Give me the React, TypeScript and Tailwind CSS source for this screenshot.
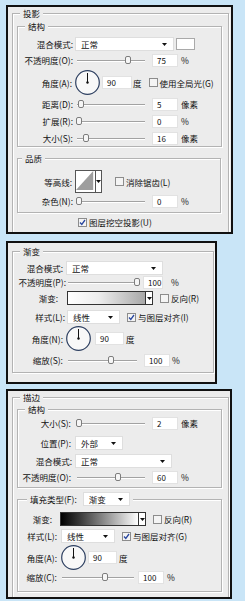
import type { ReactNode } from 'react'

function Arrow() {
    return <svg width="5" height="3" viewBox="0 0 5 3" className="shrink-0"><path d="M0 0h5L2.5 3z" fill="#111" /></svg>
}

function L({ w, children }: { w: string; children: ReactNode }) {
    return <span className={`${w} shrink-0 text-right whitespace-nowrap`}>{children}</span>
}

function Select({ text, cls }: { text: string; cls: string }) {
    return (
        <div className={`${cls} h-[14px] bg-white border border-[#dedede] flex items-center justify-between pl-[5px] pr-[6px] shrink-0`}>
            <span>{text}</span>
            <Arrow />
        </div>
    )
}

function Slider({ cls, at }: { cls: string; at: number }) {
    return (
        <div className={`relative ${cls} h-[10px] shrink-0 flex items-center`}>
            <div className="w-full h-px bg-[#a2a2a2] shadow-[0_1px_0_#fff]" />
            <div className="absolute top-[1px] w-[6px] h-[8px] rounded-[2px] border border-[#7d7d7d] bg-[#f6f6f6]" style={{ left: at }} />
        </div>
    )
}

function Num({ v, cls }: { v: string; cls: string }) {
    return <div className={`${cls} h-[13px] bg-white border border-[#e2e2e2] pl-[4px] text-[8px] leading-[11px] shrink-0`}>{v}</div>
}

function Dial() {
    return (
        <svg width="25" height="25" viewBox="0 0 25 25" className="shrink-0">
            <circle cx="12.5" cy="12.5" r="11.8" fill="#f8f8f8" stroke="#2d3f60" strokeWidth="1.2" />
            <line x1="12.5" y1="12.5" x2="12.5" y2="3" stroke="#111" />
            <circle cx="12.5" cy="12.5" r="1.2" fill="#111" />
        </svg>
    )
}

function Check({ on, cls = '' }: { on?: boolean; cls?: string }) {
    return (
        <div className={`${cls} w-[9px] h-[9px] border border-[#8c8c8c] bg-[#f4f4f4] shrink-0 flex items-center justify-center`}>
            {on && <svg width="7" height="7" viewBox="0 0 7 7"><path d="M1 3.5l1.8 2L6 1" fill="none" stroke="#2a48a0" strokeWidth="1.3" /></svg>}
        </div>
    )
}

function Group({ title, lcls, cls, children }: { title: ReactNode; lcls: string; cls: string; children: ReactNode }) {
    return (
        <fieldset className={`border border-[#b3b3b3] shadow-[inset_1px_1px_0_#fff,1px_1px_0_#fff] ${cls}`}>
            <legend className={`${lcls} px-[3px] bg-[#ececec] leading-[12px]`}>{title}</legend>
            {children}
        </fieldset>
    )
}

function GradBar({ cls, bg }: { cls: string; bg: string }) {
    return (
        <div className="flex shrink-0">
            <div className={`${cls} h-[14px] border border-[#333] ${bg}`} />
            <div className="w-[7px] h-[14px] border border-l-0 border-[#333] bg-white flex items-center justify-center"><Arrow /></div>
        </div>
    )
}

export default function App() {
    return (
        <div className="w-[245px] h-[601px] overflow-hidden bg-[#c9e5f7] pt-[5px] text-[8.5px] leading-[12px] text-[#111] font-['Noto_Sans_CJK_SC','Noto_Sans',sans-serif]">
            {/* 投影 */}
            <div className="ml-[6px] w-[227px] h-[229px] border-2 border-[#111] bg-[#ececec] flex flex-col pl-[4px] pr-[2px] overflow-hidden">
                <Group title="投影" lcls="ml-[7px]" cls="flex-1 border-b-0">
                    <Group title="结构" lcls="ml-[7px]" cls="ml-[4px] mr-[6px] mt-[1px] pb-[1px]">
                        <div className="flex items-center h-[14px] mt-[5px]">
                            <L w="w-[55px]">混合模式:</L>
                            <Select text="正常" cls="ml-[2px] w-[99px]" />
                            <div className="ml-[2px] w-[19px] h-[12px] bg-white border border-[#a9a9a9]" />
                        </div>
                        <div className="flex items-center h-[14px] mt-[2px]">
                            <L w="w-[55px]">不透明度(O):</L>
                            <Slider cls="ml-[4px] w-[68px]" at={48} />
                            <Num v="75" cls="ml-[7px] w-[26px]" />
                            <span className="ml-[3px]">%</span>
                        </div>
                        <div className="flex items-center h-[25px] mt-[3px]">
                            <L w="w-[54px]">角度(A):</L>
                            <div className="ml-[3px]"><Dial /></div>
                            <Num v="90" cls="ml-[2px] w-[30px]" />
                            <span className="ml-[1px]">度</span>
                            <Check cls="ml-[7px]" />
                            <span className="ml-[2px]">使用全局光(G)</span>
                        </div>
                        <div className="flex items-center h-[14px] mt-[2px]">
                            <L w="w-[55px]">距离(D):</L>
                            <Slider cls="ml-[4px] w-[68px]" at={1} />
                            <Num v="5" cls="ml-[7px] w-[26px]" />
                            <span className="ml-[3px]">像素</span>
                        </div>
                        <div className="flex items-center h-[14px] mt-[3px]">
                            <L w="w-[55px]">扩展(R):</L>
                            <Slider cls="ml-[4px] w-[68px]" at={-1} />
                            <Num v="0" cls="ml-[7px] w-[26px]" />
                            <span className="ml-[3px]">%</span>
                        </div>
                        <div className="flex items-center h-[14px] mt-[3px]">
                            <L w="w-[55px]">大小(S):</L>
                            <Slider cls="ml-[4px] w-[68px]" at={6} />
                            <Num v="16" cls="ml-[7px] w-[26px]" />
                            <span className="ml-[3px]">像素</span>
                        </div>
                    </Group>
                    <Group title="品质" lcls="ml-[4px]" cls="ml-[4px] mr-[7px] mt-[5px] pb-[4px]">
                        <div className="flex items-center h-[23px] mt-[6px]">
                            <L w="w-[54px]">等高线:</L>
                            <div className="ml-[3px] flex">
                                <svg width="21" height="23" viewBox="0 0 21 23" className="border border-[#555] bg-white">
                                    <path d="M0 21L19 0V21z" fill="#9e9e9e" />
                                </svg>
                                <div className="w-[6px] h-[23px] border border-l-0 border-[#555] bg-white flex items-center justify-center"><Arrow /></div>
                            </div>
                            <Check cls="ml-[13px]" />
                            <span className="ml-[2px]">消除锯齿(L)</span>
                        </div>
                        <div className="flex items-center h-[14px] mt-[1px]">
                            <L w="w-[55px]">杂色(N):</L>
                            <Slider cls="ml-[4px] w-[68px]" at={-1} />
                            <Num v="0" cls="ml-[7px] w-[26px]" />
                            <span className="ml-[3px]">%</span>
                        </div>
                    </Group>
                    <div className="flex items-center h-[12px] mt-[3px] pl-[65px]">
                        <Check on />
                        <span className="ml-[2px]">图层挖空投影(U)</span>
                    </div>
                </Group>
            </div>

            {/* 渐变 */}
            <div className="ml-[6px] mt-[7px] w-[211px] h-[143px] border-2 border-[#111] bg-[#ececec] pl-[4px] pr-[1px]">
                <Group title="渐变" lcls="ml-[7px]" cls="mt-[2px] pb-[5px]">
                    <div className="flex items-center h-[14px] mt-[4px]">
                        <L w="w-[50px]">混合模式:</L>
                        <Select text="正常" cls="ml-[3px] w-[97px]" />
                    </div>
                    <div className="flex items-center h-[12px] mt-[1px]">
                        <L w="w-[53px]">不透明度(P):</L>
                        <Slider cls="ml-[2px] w-[72px]" at={66} />
                        <Num v="100" cls="ml-[3px] w-[20px]" />
                        <span className="ml-[8px]">%</span>
                    </div>
                    <div className="flex items-center h-[14px] mt-[3px]">
                        <L w="w-[45px]">渐变:</L>
                        <div className="ml-[9px]"><GradBar cls="w-[79px]" bg="bg-[linear-gradient(to_right,#fff,#ededed_40%,#a8a8a8)]" /></div>
                        <Check cls="ml-[7px]" />
                        <span className="ml-[2px]">反向(R)</span>
                    </div>
                    <div className="flex items-center h-[14px] mt-[5px]">
                        <L w="w-[52px]">样式(L):</L>
                        <Select text="线性" cls="ml-[2px] w-[53px]" />
                        <Check on cls="ml-[7px]" />
                        <span className="ml-[2px]">与图层对齐(I)</span>
                    </div>
                    <div className="flex items-center h-[25px] mt-[2px]">
                        <L w="w-[50px]">角度(N):</L>
                        <div className="ml-[3px]"><Dial /></div>
                        <Num v="90" cls="ml-[4px] w-[29px]" />
                        <span className="ml-[2px]">度</span>
                    </div>
                    <div className="flex items-center h-[14px] mt-[2px]">
                        <L w="w-[50px]">缩放(S):</L>
                        <Slider cls="ml-[5px] w-[69px]" at={40} />
                        <Num v="100" cls="ml-[7px] w-[26px]" />
                        <span className="ml-[2px]">%</span>
                    </div>
                </Group>
            </div>

            {/* 描边 */}
            <div className="ml-[6px] mt-[5px] w-[226px] h-[210px] border-2 border-[#111] bg-[#ececec] flex flex-col pl-[4px] pr-[1px] overflow-hidden">
                <Group title="描边" lcls="ml-[7px]" cls="flex-1 border-b-0">
                    <Group title="结构" lcls="ml-[7px]" cls="ml-[4px] mr-[6px] pb-[3px]">
                        <div className="flex items-center h-[14px] mt-[1px]">
                            <L w="w-[53px]">大小(S):</L>
                            <Slider cls="ml-[6px] w-[68px]" at={-1} />
                            <Num v="2" cls="ml-[7px] w-[26px]" />
                            <span className="ml-[3px]">像素</span>
                        </div>
                        <div className="flex items-center h-[14px] mt-[6px]">
                            <L w="w-[53px]">位置(P):</L>
                            <Select text="外部" cls="ml-[4px] w-[48px]" />
                        </div>
                        <div className="flex items-center h-[14px] mt-[4px]">
                            <L w="w-[54px]">混合模式:</L>
                            <Select text="正常" cls="ml-[3px] w-[97px]" />
                        </div>
                        <div className="flex items-center h-[14px] mt-[2px]">
                            <L w="w-[53px]">不透明度(O):</L>
                            <Slider cls="ml-[6px] w-[68px]" at={38} />
                            <Num v="60" cls="ml-[7px] w-[26px]" />
                            <span className="ml-[3px]">%</span>
                        </div>
                    </Group>
                    <Group
                        title={<span className="flex items-center">填充类型(F):<Select text="渐变" cls="ml-[6px] w-[47px]" /></span>}
                        lcls="ml-[9px]"
                        cls="ml-[4px] mr-[6px] mt-[4px] pb-[7px]"
                    >
                        <div className="flex items-center h-[14px] mt-[6px]">
                            <L w="w-[34px]">渐变:</L>
                            <div className="ml-[8px]"><GradBar cls="w-[79px]" bg="bg-[linear-gradient(to_right,#000,#3a3a3a_25%,#fff)]" /></div>
                            <Check cls="ml-[7px]" />
                            <span className="ml-[2px]">反向(R)</span>
                        </div>
                        <div className="flex items-center h-[14px] mt-[3px]">
                            <L w="w-[39px]">样式(L):</L>
                            <Select text="线性" cls="ml-[4px] w-[54px]" />
                            <Check on cls="ml-[7px]" />
                            <span className="ml-[2px]">与图层对齐(G)</span>
                        </div>
                        <div className="flex items-center h-[25px] mt-[2px]">
                            <L w="w-[39px]">角度(A):</L>
                            <div className="ml-[4px]"><Dial /></div>
                            <Num v="90" cls="ml-[2px] w-[29px]" />
                            <span className="ml-[2px]">度</span>
                        </div>
                        <div className="flex items-center h-[14px]">
                            <L w="w-[39px]">缩放(C):</L>
                            <Slider cls="ml-[5px] w-[72px]" at={40} />
                            <Num v="100" cls="ml-[4px] w-[26px]" />
                            <span className="ml-[3px]">%</span>
                        </div>
                    </Group>
                </Group>
            </div>
        </div>
    )
}
